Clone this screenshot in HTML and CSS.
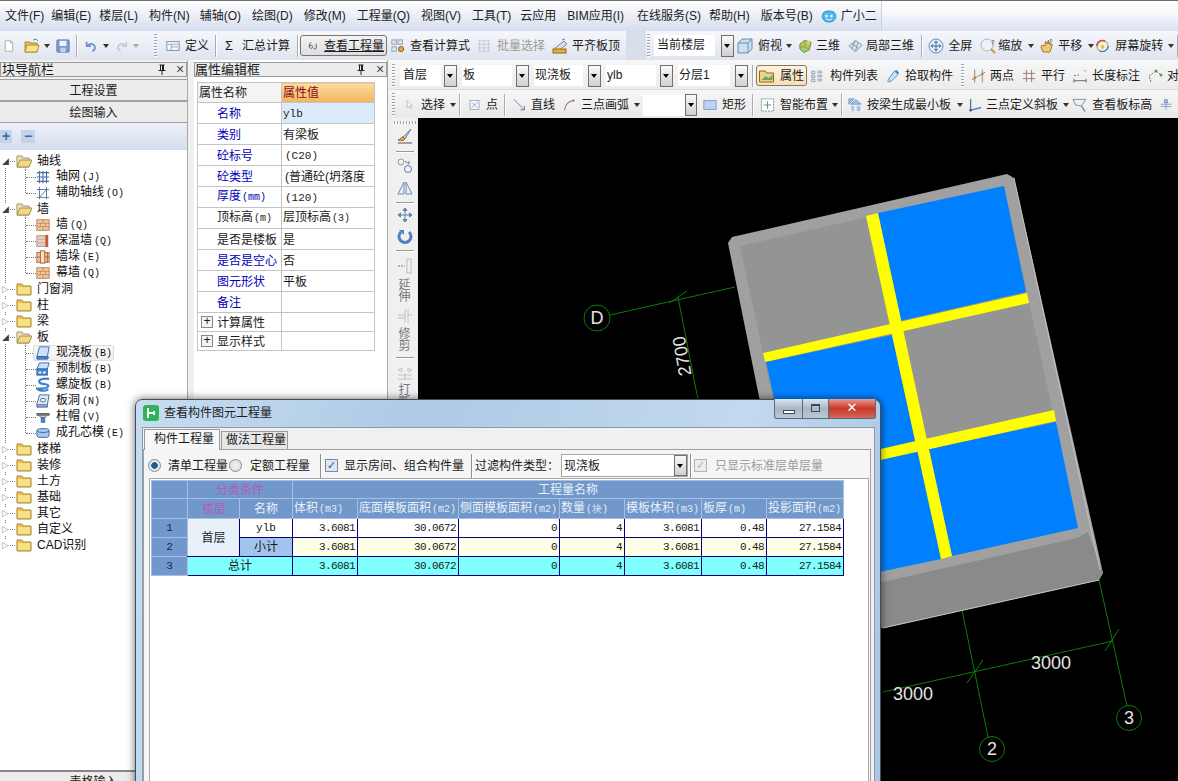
FILE: index.html
```html
<!DOCTYPE html>
<html lang="zh">
<head>
<meta charset="utf-8">
<title>查看构件图元工程量</title>
<link rel="stylesheet" href="styles.css">
</head>
<body>
<svg class="defs" aria-hidden="true">
  <symbol id="pin" viewBox="0 0 12 12"><path d="M3.500 1h5M4.500 1v5M7.500 1v5M6.500 1v5M2.500 6.500h7M6 7v4" stroke="#222" fill="none"/></symbol>
  <symbol id="doc" viewBox="0 0 16 16"><path d="M3 1h7l3 3v11H3z" fill="#fff" stroke="#9a9a9a"/><path d="M10 1v3h3" fill="#e8e8e8" stroke="#9a9a9a"/></symbol>
  <symbol id="open" viewBox="0 0 16 16"><path d="M1 4h5l1 1h6v9H1z" fill="#e6c45a" stroke="#a88a30"/><path d="M3 7h12l-2 7H1z" fill="#f9e08c" stroke="#b0922f"/><path d="M9 2l3-1 2 2" fill="none" stroke="#4a8ac8"/></symbol>
  <symbol id="save" viewBox="0 0 16 16"><rect x="1" y="1" width="14" height="14" rx="1" fill="#7d9bd0" stroke="#5273ad"/><rect x="4" y="2" width="8" height="6" fill="#eef2fa"/><rect x="5" y="10" width="6" height="5" fill="#c9d3e4"/></symbol>
  <symbol id="undo" viewBox="0 0 16 16"><path d="M3 3v5h5M3.500 8c3-4 8-3 9 1 .5 2-1 4-3 5" fill="none" stroke="#6c92d0" stroke-width="2"/></symbol>
  <symbol id="redo" viewBox="0 0 16 16"><path d="M13 3v5H8M12.500 8c-3-4-8-3-9 1-.5 2 1 4 3 5" fill="none" stroke="#c6ccd6" stroke-width="2"/></symbol>
  <symbol id="define" viewBox="0 0 16 16"><rect x="1" y="3" width="14" height="10" fill="#f4f7fb" stroke="#7388a8"/><path d="M2 6h12M6 6v7M6 9h8" stroke="#8ea2bf"/></symbol>
  <symbol id="glasses" viewBox="0 0 16 16"><path d="M4 3C1 6 1 11 4 11s3-4 0-4-2 1-3 2M11 5v5c0 3-3 2-4 1" fill="none" stroke="#555" stroke-width="1.200"/></symbol>
  <symbol id="calc" viewBox="0 0 16 16"><rect x="1" y="1" width="5" height="5" fill="#dfe6f0" stroke="#8899b3"/><rect x="8" y="1" width="5" height="5" fill="#dfe6f0" stroke="#8899b3"/><rect x="1" y="9" width="5" height="5" fill="#dfe6f0" stroke="#8899b3"/><circle cx="11.500" cy="11.500" r="3" fill="#e3a23c" stroke="#8a5a14"/></symbol>
  <symbol id="batch" viewBox="0 0 16 16"><path d="M1 2h14M1 6h14M1 10h14M1 14h14M3 2v12M8 2v12M13 2v12" stroke="#c3c7cf"/></symbol>
  <symbol id="flush" viewBox="0 0 16 16"><path d="M3 10l9-7 3 3-9 7z" fill="#d6dde8" stroke="#7e8ba0"/><rect x="1" y="11" width="13" height="4" fill="#e2b23f" stroke="#8d6a14"/><path d="M10 2l3-1" stroke="#7e8ba0"/></symbol>
  <symbol id="cube" viewBox="0 0 16 16"><path d="M1 5l4-4h10v10l-4 4H1z" fill="#c8e0f0" stroke="#6f8da8"/><path d="M1 5h10v10M11 5l4-4" fill="none" stroke="#6f8da8"/></symbol>
  <symbol id="three" viewBox="0 0 16 16"><path d="M2 6l5-4 7 2-2 8-6 3-4-4z" fill="#9fcf70" stroke="#5c8e3a"/><path d="M7 2l1 7-6 0M8 9l4 3" stroke="#d9822b" fill="none"/><circle cx="11" cy="4" r="2" fill="#f0c94e"/></symbol>
  <symbol id="local" viewBox="0 0 16 16"><path d="M1 8l7-6 7 5-7 7z" fill="#dbe5ef" stroke="#8496ab"/><path d="M4 5.500l7 5M8 2l-4 9M11 4l-3 9" stroke="#8496ab" fill="none"/></symbol>
  <symbol id="full" viewBox="0 0 16 16"><circle cx="8" cy="8" r="7" fill="#e3ecf7" stroke="#6f8db3"/><path d="M8 3v10M3 8h10M8 3L6.500 5M8 3l1.500 2M8 13l-1.500-2M8 13l1.500-2M3 8l2-1.500M3 8l2 1.500M13 8l-2-1.500M13 8l-2 1.500" stroke="#3f6ea8" fill="none"/></symbol>
  <symbol id="zoom" viewBox="0 0 16 16"><circle cx="7" cy="7" r="6" fill="#edf1f7" stroke="#a9b6c8"/><path d="M11 11l4 4" stroke="#c59a3a" stroke-width="2"/><path d="M13 2v5M11.500 3.500L13 2l1.500 1.500" stroke="#8a8a8a" fill="none"/></symbol>
  <symbol id="pan" viewBox="0 0 16 16"><path d="M3 9l2 5h7l2-6V6l-2 1V4l-1.500 2V2L9 6 7.500 3 7 8 4 7z" fill="#eec77a" stroke="#a67c2a"/><path d="M13 1v4M11.500 2.500L13 1l1.500 1.500" stroke="#888" fill="none"/></symbol>
  <symbol id="rot" viewBox="0 0 16 16"><circle cx="8" cy="8" r="6" fill="#f3f1dc" stroke="#74a04c"/><path d="M2 8a6 6 0 0 1 9-5" fill="none" stroke="#d04a3a" stroke-width="1.600"/><path d="M14 8a6 6 0 0 1-9 5" fill="none" stroke="#3f7fc0" stroke-width="1.200"/><circle cx="8" cy="9" r="2" fill="#e7c14f"/></symbol>
  <symbol id="attr" viewBox="0 0 16 16"><path d="M1 3h6l1 2h7v9H1z" fill="#eed08a" stroke="#8d6b24"/><path d="M3 12l4-4 3 2 4-3v5H3z" fill="#6ea560"/></symbol>
  <symbol id="list" viewBox="0 0 16 16"><path d="M2 2h4v3H2zM2 7h4v3H2zM2 12h4v3H2zM9 2h6M9 7h6M9 12h6M9 4h6M9 9h6M9 14h6" fill="none" stroke="#7b90ad"/></symbol>
  <symbol id="drop" viewBox="0 0 16 16"><path d="M10 2l4 4-7 7-4 2-1-1 2-4z" fill="#cfe6f7" stroke="#3f84c5"/><path d="M10 3l2-2 3 3-2 2z" fill="#3f84c5"/></symbol>
  <symbol id="two" viewBox="0 0 16 16"><path d="M4 1v14M12 1v14M1 12l14-8" stroke="#96806a" fill="none"/><circle cx="4" cy="10" r="1.500" fill="#c08a34"/><circle cx="12" cy="6" r="1.500" fill="#8bb04a"/></symbol>
  <symbol id="para" viewBox="0 0 16 16"><path d="M5 1v14M11 1v14M1 5h14M1 11h14" stroke="#9a6a6a"/></symbol>
  <symbol id="dim" viewBox="0 0 16 16"><path d="M1 11v4M14 11v4M1 13h13" stroke="#666" fill="none"/><path d="M2 7v1M13 2v1M5 7h1" stroke="#4a9a4a" stroke-width="2"/></symbol>
  <symbol id="align" viewBox="0 0 16 16"><path d="M2 8l7-5 5 4M4 14L2 8" stroke="#777" stroke-dasharray="2 1" fill="none"/><circle cx="9" cy="3" r="1.500" fill="#5a9a4a"/><circle cx="14" cy="7" r="1.500" fill="#5a9a4a"/></symbol>
  <symbol id="cursor" viewBox="0 0 16 16"><path d="M5 1v11l3-2 2 4 2-1-2-4h3z" fill="#fff" stroke="#8aa0bc"/></symbol>
  <symbol id="pt" viewBox="0 0 16 16"><rect x="1.500" y="1.500" width="13" height="13" fill="#f4f7fb" stroke="#7f93b3"/><path d="M4 4l8 8M12 4l-8 8" stroke="#7f93b3"/></symbol>
  <symbol id="line" viewBox="0 0 16 16"><path d="M1 1l13 13M14 14v-5M14 14H9" stroke="#50688a" fill="none"/></symbol>
  <symbol id="arc" viewBox="0 0 16 16"><path d="M2 15C3 8 7 3 14 2" stroke="#8b7a6a" stroke-width="1.500" fill="none"/><circle cx="14" cy="2" r="1.500" fill="#c45a4a"/></symbol>
  <symbol id="rect" viewBox="0 0 16 16"><rect x="1" y="3" width="14" height="10" fill="#bcd4f2" stroke="#7396c9"/></symbol>
  <symbol id="smart" viewBox="0 0 16 16"><rect x="1.500" y="1.500" width="13" height="13" fill="#fff" stroke="#7e8a99" stroke-dasharray="2 1"/><path d="M8 4v8M4 8h8" stroke="#5c8e7a"/></symbol>
  <symbol id="beam" viewBox="0 0 16 16"><path d="M1 1h6l-6 6zM9 2l6 5H3z" fill="#9fc4e8" stroke="#6f97c4"/><rect x="4" y="9" width="3" height="6" fill="#9fc4e8"/><rect x="10" y="9" width="4" height="6" fill="#9fc4e8"/></symbol>
  <symbol id="slope" viewBox="0 0 16 16"><path d="M3 1v13l12-3" stroke="#3c7fc0" fill="none" stroke-width="1.500"/><circle cx="3" cy="14" r="1.500" fill="#555"/></symbol>
  <symbol id="height" viewBox="0 0 16 16"><path d="M1 2h14l-5 7-6-1z" fill="#eef2f7" stroke="#7d8ea6"/><path d="M10 9l4 6" stroke="#7d8ea6" stroke-width="1.500"/></symbol>
  <symbol id="last" viewBox="0 0 16 16"><rect x="6" y="1" width="4" height="4" fill="#a8c4e6" stroke="#6f90bd"/><path d="M1 7h14M1 10h14M8 5v10" stroke="#6f90bd"/></symbol>
  <symbol id="brush" viewBox="0 0 16 16"><path d="M14 1L6 9l2 2z" fill="#c9c9d1" stroke="#7d7d8a"/><path d="M6 9c-2 0-2 2-5 3 3 1 6 1 7-1z" fill="#dca24d" stroke="#9a6e24"/><path d="M1 15h14" stroke="#555"/></symbol>
  <symbol id="swap" viewBox="0 0 16 16"><circle cx="4" cy="4" r="3" fill="none" stroke="#999"/><circle cx="11" cy="11" r="3.500" fill="none" stroke="#5e81ad"/><path d="M8 3l4 3M12 6V3" stroke="#777" fill="none"/></symbol>
  <symbol id="mirror" viewBox="0 0 16 16"><path d="M7 2L1 14h6zM9 2l6 12H9z" fill="#e6edf6" stroke="#6d8db6"/></symbol>
  <symbol id="move" viewBox="0 0 16 16"><path d="M8 1v14M1 8h14M8 1L6 3.500h4zM8 15l-2-2.500h4zM1 8l2.500-2v4zM15 8l-2.500-2v4z" fill="#5e81ad" stroke="#5e81ad"/></symbol>
  <symbol id="rotate" viewBox="0 0 16 16"><path d="M4 3a6 6 0 1 0 8 0" fill="none" stroke="#4f7fc1" stroke-width="3"/><path d="M2 1h5v5z" fill="#4f7fc1"/></symbol>
  <symbol id="ext" viewBox="0 0 16 16"><path d="M1 8h7" stroke="#b5b5b5" stroke-dasharray="2 1" stroke-width="2"/><rect x="10" y="1" width="4" height="14" fill="none" stroke="#bcbcbc"/></symbol>
  <symbol id="trim" viewBox="0 0 16 16"><path d="M8 1v14M11 1v14M1 7h7M11 7h4M1 10h7" stroke="#c0c0c0" fill="none"/></symbol>
  <symbol id="brk" viewBox="0 0 16 16"><path d="M1 5l4-2v4zM15 5l-4-2v4zM1 10h14M1 14h14M8 8v7" stroke="#c4c4c4" fill="none"/></symbol>
  <symbol id="fold" viewBox="0 0 16 16"><path d="M1 3h5l1 2h8v9H1z" fill="#f0c838" stroke="#9a8a50"/><rect x="2" y="6" width="12" height="7" fill="#f8e080"/></symbol>
  <symbol id="foldo" viewBox="0 0 16 16"><path d="M1 3h5l1 2h6v9H1z" fill="#efe3bd" stroke="#a09468"/><path d="M4 7h12l-3 7H1z" fill="#f4d880" stroke="#a49050"/></symbol>
  <symbol id="grid" viewBox="0 0 16 16"><path d="M1 3h14M1 8h14M1 13h14M4 1v14M8 1v14M12 1v14" stroke="#4c6fa8" stroke-width="1.300" fill="none"/></symbol>
  <symbol id="aux" viewBox="0 0 16 16"><path d="M1 13h14M1 4h14M4 1v14M12 1v14M4 13l8-9" stroke="#4c6fa8" fill="none"/></symbol>
  <symbol id="brick" viewBox="0 0 16 16"><rect x="1" y="2" width="14" height="12" fill="#f2c8a4" stroke="#b5784a"/><path d="M1 6h14M1 10h14M8 2v4M5 6v4M11 6v4M8 10v4" stroke="#c08a5a"/></symbol>
  <symbol id="ins" viewBox="0 0 16 16"><rect x="1" y="2" width="10" height="12" fill="#e8cfc4" stroke="#b08878"/><path d="M1 6h10M1 10h10" stroke="#c9a090"/><rect x="11" y="1" width="3" height="14" fill="#c05a3a"/></symbol>
  <symbol id="pier" viewBox="0 0 16 16"><rect x="1" y="3" width="14" height="11" fill="#f0c8a0" stroke="#a85a30"/><rect x="5" y="1" width="5" height="14" fill="#f8e0c8" stroke="#a85a30"/><path d="M1 8h4M10 8h5M13 3v11" stroke="#a85a30"/></symbol>
  <symbol id="slab" viewBox="0 0 16 16"><path d="M4 1h11l-2 11H1z" fill="#cfe2f8" stroke="#2e64ac"/><path d="M1 12h12v3H1zM13 15l2-3" fill="#4e86cc" stroke="#2e64ac"/></symbol>
  <symbol id="pre" viewBox="0 0 16 16"><path d="M4 1h11l-2 7H1z" fill="#cfe2f8" stroke="#2e64ac"/><rect x="1" y="8" width="12" height="7" fill="#4e86cc" stroke="#2e64ac"/><rect x="3" y="11" width="3" height="2" fill="#fff"/><rect x="8" y="11" width="3" height="2" fill="#fff"/></symbol>
  <symbol id="spiral" viewBox="0 0 16 16"><path d="M15 1C8 0 2 2 4 5s10 1 10 4-8 3-13 3c1 2 8 4 13 1" fill="none" stroke="#3f80d0" stroke-width="2.500"/></symbol>
  <symbol id="hole" viewBox="0 0 16 16"><path d="M4 1h11l-2 11H1z" fill="#dfe9f6" stroke="#40608e"/><ellipse cx="8" cy="7" rx="3" ry="2" fill="#fff" stroke="#40608e"/><path d="M1 12v3h12v-3" fill="#8aa8ce" stroke="#40608e"/></symbol>
  <symbol id="cap" viewBox="0 0 16 16"><path d="M1 4h14v2H1z" fill="#888" stroke="#555"/><path d="M3 6h10l-3 3H6z" fill="#c8c8c8" stroke="#666"/><rect x="6" y="9" width="4" height="5" fill="#4e86cc" stroke="#2e64ac"/></symbol>
  <symbol id="core" viewBox="0 0 16 16"><rect x="1" y="3" width="14" height="10" rx="3" fill="#a8c8ec" stroke="#2e64ac"/><path d="M1 6c3 2 11 2 14 0" fill="none" stroke="#2e64ac"/></symbol>
</svg>

<header class="head">
  <nav class="menu">
    <span class="mi">文件(F)</span><span class="mi">编辑(E)</span><span class="mi">楼层(L)</span><span class="mi">构件(N)</span><span class="mi">辅轴(O)</span><span class="mi">绘图(D)</span><span class="mi">修改(M)</span><span class="mi">工程量(Q)</span><span class="mi">视图(V)</span><span class="mi">工具(T)</span><span class="mi">云应用</span><span class="mi">BIM应用(I)</span><span class="mi">在线服务(S)</span><span class="mi">帮助(H)</span><span class="mi">版本号(B)</span>
    <span class="mi helper"><svg class="ic w16" viewBox="0 0 16 16"><path d="M2 6C2 2 14 2 14 6c2 3 0 8-6 8S0 9 2 6z" fill="#54b8e8" stroke="#2e8cc4"/><circle cx="5.500" cy="8" r="1.200" fill="#fff"/><circle cx="10.500" cy="8" r="1.200" fill="#fff"/><path d="M5 10.500c2 2 4 2 6 0" stroke="#fff" fill="none"/></svg><b class="hname">广小二</b></span>
  </nav>
  <div class="tb tb1">
    <svg class="ic w12 m3"><use href="#doc"/></svg><svg class="ic w16 m9"><use href="#open"/></svg><i class="arr m4"></i><svg class="ic w14 m5"><use href="#save"/></svg><i class="sep m6"></i>
    <svg class="ic w14 m7"><use href="#undo"/></svg><i class="arr m5"></i><svg class="ic w14 m5"><use href="#redo"/></svg><i class="arr m4 off"></i><i class="grip m14"></i>
    <svg class="ic w14 m9"><use href="#define"/></svg><span class="t m5">定义</span><i class="sep m6"></i>
    <span class="t sig m9">Σ</span><span class="t m8">汇总计算</span><i class="sep m7"></i>
    <span class="tbtn m2 qty"><svg class="ic w12 m8"><use href="#glasses"/></svg><span class="t m4 ul">查看工程量</span></span>
    <svg class="ic w14 m4"><use href="#calc"/></svg><span class="t m5">查看计算式</span>
    <svg class="ic w14 m7"><use href="#batch"/></svg><span class="t m6 dis">批量选择</span>
    <svg class="ic w16 m7"><use href="#flush"/></svg><span class="t m4">平齐板顶</span>
    <i class="endcap m6"></i><i class="grip m1"></i>
    <span class="sel s61 m4">当前楼层</span><i class="dd m6"></i>
    <svg class="ic w16 m3"><use href="#cube"/></svg><span class="t m5">俯视</span><i class="arr m4"></i>
    <svg class="ic w15 m5"><use href="#three"/></svg><span class="t m3">三维</span>
    <svg class="ic w15 m8"><use href="#local"/></svg><span class="t m3">局部三维</span><i class="sep m7"></i>
    <svg class="ic w16 m6"><use href="#full"/></svg><span class="t m4">全屏</span>
    <svg class="ic w16 m8"><use href="#zoom"/></svg><span class="t m2">缩放</span><i class="arr m6"></i>
    <svg class="ic w16 m3"><use href="#pan"/></svg><span class="t m4">平移</span><i class="arr m6"></i>
    <svg class="ic w15"><use href="#rot"/></svg><span class="t m5">屏幕旋转</span><i class="arr m5"></i><i class="sep m2"></i>
  </div>
</header>

<main class="work">
  <aside class="nav">
    <div class="ptitle"><span class="cut">块导航栏</span><svg class="pin"><use href="#pin"/></svg><span class="x">×</span></div>
    <div class="navbtn first">工程设置</div>
    <div class="navbtn">绘图输入</div>
    <div class="navtools"><span class="nb">+</span><span class="nb minus">−</span></div>
    <div class="tree">
      <div class="node"><i class="exp open"></i><svg class="ic w16"><use href="#foldo"/></svg><span class="tl">轴线</span></div>
      <div class="kids">
        <div class="leaf"><svg class="ic w14"><use href="#grid"/></svg><span class="tl l6">轴网<em>(J)</em></span></div>
        <div class="leaf"><svg class="ic w14"><use href="#aux"/></svg><span class="tl l6">辅助轴线<em>(O)</em></span></div>
      </div>
      <div class="node"><i class="exp open"></i><svg class="ic w16"><use href="#foldo"/></svg><span class="tl">墙</span></div>
      <div class="kids">
        <div class="leaf"><svg class="ic w14"><use href="#brick"/></svg><span class="tl l6">墙<em>(Q)</em></span></div>
        <div class="leaf"><svg class="ic w14"><use href="#ins"/></svg><span class="tl l6">保温墙<em>(Q)</em></span></div>
        <div class="leaf"><svg class="ic w14"><use href="#pier"/></svg><span class="tl l6">墙垛<em>(E)</em></span></div>
        <div class="leaf"><svg class="ic w14"><use href="#brick"/></svg><span class="tl l6">幕墙<em>(Q)</em></span></div>
      </div>
      <div class="node"><i class="exp"></i><svg class="ic w16"><use href="#fold"/></svg><span class="tl">门窗洞</span></div>
      <div class="node"><i class="exp"></i><svg class="ic w16"><use href="#fold"/></svg><span class="tl">柱</span></div>
      <div class="node"><i class="exp"></i><svg class="ic w16"><use href="#fold"/></svg><span class="tl">梁</span></div>
      <div class="node"><i class="exp open"></i><svg class="ic w16"><use href="#foldo"/></svg><span class="tl">板</span></div>
      <div class="kids">
        <div class="leaf cur"><svg class="ic w14"><use href="#slab"/></svg><span class="tl l6">现浇板<em>(B)</em></span></div>
        <div class="leaf"><svg class="ic w14"><use href="#pre"/></svg><span class="tl l6">预制板<em>(B)</em></span></div>
        <div class="leaf"><svg class="ic w14"><use href="#spiral"/></svg><span class="tl l6">螺旋板<em>(B)</em></span></div>
        <div class="leaf"><svg class="ic w14"><use href="#hole"/></svg><span class="tl l6">板洞<em>(N)</em></span></div>
        <div class="leaf"><svg class="ic w14"><use href="#cap"/></svg><span class="tl l6">柱帽<em>(V)</em></span></div>
        <div class="leaf"><svg class="ic w14"><use href="#core"/></svg><span class="tl l6">成孔芯模<em>(E)</em></span></div>
      </div>
      <div class="node"><i class="exp"></i><svg class="ic w16"><use href="#fold"/></svg><span class="tl">楼梯</span></div>
      <div class="node"><i class="exp"></i><svg class="ic w16"><use href="#fold"/></svg><span class="tl">装修</span></div>
      <div class="node"><i class="exp"></i><svg class="ic w16"><use href="#fold"/></svg><span class="tl">土方</span></div>
      <div class="node"><i class="exp"></i><svg class="ic w16"><use href="#fold"/></svg><span class="tl">基础</span></div>
      <div class="node"><i class="exp"></i><svg class="ic w16"><use href="#fold"/></svg><span class="tl">其它</span></div>
      <div class="node"><i class="exp"></i><svg class="ic w16"><use href="#fold"/></svg><span class="tl">自定义</span></div>
      <div class="node"><i class="exp"></i><svg class="ic w16"><use href="#fold"/></svg><span class="tl">CAD识别</span></div>
    </div>
    <div class="navfoot"><span>表格输入</span></div>
  </aside>

  <section class="props">
    <div class="ptitle"><span>属性编辑框</span><svg class="pin"><use href="#pin"/></svg><span class="x">×</span></div>
    <table class="ptable">
      <tr class="phead"><th>属性名称</th><th class="pv">属性值</th></tr>
      <tr class="psel"><td class="b">名称</td><td class="latin">ylb</td></tr>
      <tr><td class="b">类别</td><td>有梁板</td></tr>
      <tr><td class="b">砼标号</td><td class="latin in">(C20)</td></tr>
      <tr><td class="b">砼类型</td><td class="in clip">(普通砼(坍落度</td></tr>
      <tr><td class="b">厚度<em>(mm)</em></td><td class="latin in">(120)</td></tr>
      <tr><td class="k">顶标高<em>(m)</em></td><td>层顶标高<em>(3)</em></td></tr>
      <tr><td class="k">是否是楼板</td><td>是</td></tr>
      <tr><td class="b">是否是空心</td><td>否</td></tr>
      <tr><td class="b">图元形状</td><td>平板</td></tr>
      <tr><td class="b">备注</td><td></td></tr>
      <tr class="pgroup"><td class="k"><i class="plus">+</i>计算属性</td><td></td></tr>
      <tr class="pgroup"><td class="k"><i class="plus">+</i>显示样式</td><td></td></tr>
    </table>
  </section>

  <section class="stage">
    <div class="tb tb2">
      <i class="grip m3"></i>
      <span class="sel s41 m5">首层</span><i class="dd m3"></i>
      <span class="sel p1 s50 m5">板</span><i class="dd m4"></i>
      <span class="sel p1 s49 m5">现浇板</span><i class="dd m5"></i>
      <span class="sel p1 s50 m5">ylb</span><i class="dd m4"></i>
      <span class="sel p1 s52 m5">分层1</span><i class="dd m5"></i><i class="sep m4"></i>
      <span class="tbtn m3 attrb"><svg class="ic w17 m2"><use href="#attr"/></svg><span class="t m5">属性</span></span>
      <svg class="ic w13 m3"><use href="#list"/></svg><span class="t m7">构件列表</span>
      <svg class="ic w14 m8"><use href="#drop"/></svg><span class="t m5">拾取构件</span><i class="grip m8"></i>
      <svg class="ic w15 m7"><use href="#two"/></svg><span class="t m4">两点</span>
      <svg class="ic w14 m8"><use href="#para"/></svg><span class="t m5">平行</span>
      <svg class="ic w15 m8"><use href="#dim"/></svg><span class="t m4">长度标注</span>
      <svg class="ic w16 m7"><use href="#align"/></svg><span class="t m4">对</span>
    </div>
    <div class="tb tb3">
      <i class="grip m3"></i>
      <svg class="ic w10 m9"><use href="#cursor"/></svg><span class="t m7">选择</span><i class="arr m5"></i><i class="sep m2"></i>
      <svg class="ic w11 m9"><use href="#pt"/></svg><span class="t m6">点</span><i class="sep m6"></i>
      <svg class="ic w13 m8"><use href="#line"/></svg><span class="t m5">直线</span>
      <svg class="ic w12 m8"><use href="#arc"/></svg><span class="t m6">三点画弧</span><i class="arr m5"></i>
      <span class="sel s42 m2"></span><i class="dd sm"></i>
      <svg class="ic w14 m6"><use href="#rect"/></svg><span class="t m5">矩形</span><i class="sep m6"></i>
      <svg class="ic w15 m7"><use href="#smart"/></svg><span class="t m5">智能布置</span><i class="arr m4"></i><i class="sep m2"></i>
      <svg class="ic w14 m6"><use href="#beam"/></svg><span class="t m5">按梁生成最小板</span><i class="arr m6"></i>
      <svg class="ic w14 m4"><use href="#slope"/></svg><span class="t m4">三点定义斜板</span><i class="arr m5"></i>
      <svg class="ic w15 m2"><use href="#height"/></svg><span class="t m5">查看板标高</span>
      <svg class="ic w12 m8"><use href="#last"/></svg>
    </div>
    <div class="view">
      <div class="vtb">
        <i class="vgrip"></i>
        <svg class="ic w16 v4"><use href="#brush"/></svg><i class="vsep v7"></i>
        <svg class="ic w16 v6"><use href="#swap"/></svg><svg class="ic w16 v6"><use href="#mirror"/></svg><i class="vsep v6"></i>
        <svg class="ic w16 v4"><use href="#move"/></svg><svg class="ic w16 v6"><use href="#rotate"/></svg><i class="vsep v5"></i>
        <svg class="ic w16 v7"><use href="#ext"/></svg><span class="vt v5">延伸</span>
        <svg class="ic w16 v5"><use href="#trim"/></svg><span class="vt v4">修剪</span><i class="vsep v5"></i>
        <svg class="ic w16 v7"><use href="#brk"/></svg><span class="vt v3">打断</span>
      </div>
      <svg class="cad" viewBox="418 118 760 663">
        <rect x="418" y="118" width="760" height="663" fill="#000"/>
        <g stroke="#0b7d0b" fill="none">
          <path d="M610 315L735 287M678 297L700 410M669 303l18-12"/>
          <circle cx="597" cy="318" r="13"/>
          <path d="M962 610L988 737M1099 580L1127 706M883 692L1113 641M967 683L983 660M1105 651L1119 629"/>
          <circle cx="992" cy="749" r="12.500"/><circle cx="1129" cy="718" r="12.500"/>
        </g>
        <polygon points="732,237 1007,174 1014,178 1103,573 1099,580 883,628 800,600 728,243" fill="#a0a0a0"/>
        <polygon points="1088,532 1103,573 1099,580 883,628 800,640 790,590 883,582 1077,538" fill="#8a8a8a"/>
        <path d="M1014 178L1100 570M883 628L1099 580" stroke="#c4c4c4" fill="none"/>
        <polygon points="740,246 1004,186 1078,528 813,586" fill="#949494"/>
        <polygon points="878,213 1004,186 1026,292 900,321" fill="#0080ff"/>
        <polygon points="766,362 892,335 915,441 790,470" fill="#0080ff"/>
        <polygon points="929,449 1056,422 1078,528 952,556" fill="#0080ff"/>
        <polygon points="800,480 920,450 941,559 813,586" fill="#0080ff"/>
        <g fill="#ffff00">
          <polygon points="866,216 878,213 952,556 941,559"/>
          <polygon points="763,353 1027,293 1029,303 765,362"/>
          <polygon points="1054,410 1056,421 790,480 788,470"/>
        </g>
        <g class="dimtxt">
          <text x="597" y="324" class="lbl">D</text>
          <text x="992" y="755" class="lbl">2</text>
          <text x="1129" y="724" class="lbl">3</text>
          <text x="1051" y="669" class="lbl">3000</text>
          <text x="913" y="700" class="lbl">3000</text>
          <text class="lbl" transform="translate(688 355) rotate(-100)">2700</text>
        </g>
      </svg>
    </div>
  </section>
</main>

<div class="dlg">
  <div class="dtitle">
    <svg class="ic w16 dlogo" viewBox="0 0 16 16"><rect width="16" height="16" rx="3" fill="#2fb25a"/><path d="M5 3v10M5 8h6M11 6v4" stroke="#fff" stroke-width="2" fill="none"/></svg>
    <span class="dname">查看构件图元工程量</span>
    <div class="wbtns"><span class="wb wmin"><i></i></span><span class="wb wmax"><i></i></span><span class="wb wclose">✕</span></div>
  </div>
  <div class="dclient">
    <div class="tabs"><span class="tab on">构件工程量</span><span class="tab">做法工程量</span></div>
    <div class="pane">
      <div class="opts">
        <i class="radio on m4"></i><span class="t m7">清单工程量</span>
        <i class="radio m1"></i><span class="t m8">定额工程量</span><i class="osep m10"></i>
        <i class="check m4">✓</i><span class="t m6">显示房间、组合构件量</span><i class="osep m7"></i>
        <span class="t m3">过滤构件类型：</span>
        <span class="combo m2"><span class="ctext">现浇板</span><i class="dd"></i></span><i class="osep m2"></i>
        <i class="check off m3">✓</i><span class="t m8 dis">只显示标准层单层量</span>
      </div>
      <div class="gridbox">
        <table class="qt">
          <colgroup><col class="c1"><col class="c2"><col class="c3"><col class="c4"><col class="c5"><col class="c6"><col class="c7"><col class="c8"><col class="c9"><col class="c10"></colgroup>
          <tr class="h1"><th></th><th colspan="2" class="pur">分类条件</th><th colspan="7">工程量名称</th></tr>
          <tr class="h2"><th></th><th class="pur">楼层</th><th class="ctr">名称</th><th>体积<em>(m3)</em></th><th>底面模板面积<em>(m2)</em></th><th>侧面模板面积<em>(m2)</em></th><th>数量<em>(块)</em></th><th>模板体积<em>(m3)</em></th><th>板厚<em>(m)</em></th><th>投影面积<em>(m2)</em></th></tr>
          <tr class="r1"><th class="no">1</th><td rowspan="2" class="fl">首层</td><td class="nm">ylb</td><td>3.6081</td><td>30.0672</td><td>0</td><td>4</td><td>3.6081</td><td>0.48</td><td>27.1584</td></tr>
          <tr class="r2"><th class="no">2</th><td class="sub">小计</td><td>3.6081</td><td>30.0672</td><td>0</td><td>4</td><td>3.6081</td><td>0.48</td><td>27.1584</td></tr>
          <tr class="r3"><th class="no">3</th><td colspan="2" class="tot">总计</td><td>3.6081</td><td>30.0672</td><td>0</td><td>4</td><td>3.6081</td><td>0.48</td><td>27.1584</td></tr>
        </table>
      </div>
    </div>
  </div>
</div>
</body>
</html>
```
FILE: styles.css
```css
*{box-sizing:border-box}
html,body{margin:0;padding:0}
body{position:relative;width:1178px;height:781px;overflow:hidden;display:flex;flex-direction:column;background:#f0f0f0;color:#1a1a1a;font:12px/16px "Liberation Sans","Noto Sans CJK SC",sans-serif}
.defs{position:absolute;width:0;height:0}
i{font-style:normal;display:block;flex:none}
em{font:10px/16px "Liberation Mono",monospace;font-style:normal;margin-left:1px}

.head{flex:none;height:60px}
.menu{height:31px;border-top:1px solid #707070;display:flex;align-items:center;padding:0 0 0 5px;gap:11px;background:linear-gradient(#fff 0,#f4f6fb 25%,#d5ddef 100%);position:relative}
.mi{flex:none;white-space:nowrap;color:#222;display:flex;align-items:center}
.mi:nth-child(1){margin-right:-4px}
.mi:nth-child(2){margin-right:-3px}
.mi:nth-child(4){margin-right:-1px}
.mi:nth-child(10){margin-right:-2px}
.mi:nth-child(12){margin-right:2px}
.mi:nth-child(13){margin-right:-3px}
.helper{margin-left:-3px;gap:4px}
.hname{font-weight:400}
.menu::after{content:"";position:absolute;left:881px;top:0;right:0;bottom:0;border-left:1px solid #c9d0de;background:linear-gradient(#fff,#fafbfd 30%,#dbe2f1)}

.tb{display:flex;align-items:center;white-space:nowrap;overflow:hidden;flex:none}
.tb1{height:29px;background:linear-gradient(#f5f7fb,#e0e4ee)}
.tb2{height:30px;padding-top:2px;background:linear-gradient(#f7f7f7,#ececec);border-bottom:1px solid #dcdcdc}
.tb3{height:28px;padding-top:2px;background:linear-gradient(#f7f7f7,#e9e9e9)}
.ic{flex:none;display:block;height:16px;overflow:visible}
.w10{width:10px}.w11{width:11px}.w12{width:12px}.w13{width:13px}.w14{width:14px}.w15{width:15px}.w16{width:16px}.w17{width:17px}
.m1{margin-left:1px}.m2{margin-left:2px}.m3{margin-left:3px}.m4{margin-left:4px}.m5{margin-left:5px}.m6{margin-left:6px}.m7{margin-left:7px}.m8{margin-left:8px}.m9{margin-left:9px}.m10{margin-left:10px}.m14{margin-left:14px}
.t{flex:none;white-space:nowrap}
.sig{width:9px;font-size:13px}
.dis{color:#9c9c9c}
.ul{text-decoration:underline}
.arr{width:7px;height:4px;position:relative}
.arr::after{content:"";position:absolute;left:0;top:0;border:3.500px solid transparent;border-top:4px solid #333;border-bottom:0}
.arr.off::after{border-top-color:#a8a8a8}
.sep{width:1px;height:22px;background:#a9adb5;box-shadow:1px 0 0 #fff}
.grip{width:3px;height:24px;background:repeating-linear-gradient(#9aa3b3 0 1px,#fff 1px 2px,transparent 2px 3px)}
.endcap{width:20px;height:29px;background:#d8deea}
.tbtn{flex:none;display:flex;align-items:center;height:21px;border:1px solid #777;border-radius:3px;background:linear-gradient(#f4f4f4,#dedede)}
.qty{width:87px}
.qty .ic{margin-left:7px}
.attrb{width:51px;border-color:#8a7a5a;background:linear-gradient(#fdf4e2,#f6dfb6)}
.attrb .ic{margin-left:1px}
.sel{flex:none;display:block;height:21px;line-height:21px;padding-left:3px;background:#fff}
.sel.p1{padding-left:1px}
.s41{width:41px}.s42{width:42px}.s49{width:49px}.s50{width:50px}.s52{width:52px}.s61{width:61px}
.dd{flex:none;width:13px;height:22px;border:1px solid #6f6f6f;background:linear-gradient(#fafafa,#cfcfcf);position:relative}
.dd.sm{width:12px}
.dd::after{content:"";position:absolute;left:2px;top:8px;border:3.500px solid transparent;border-top:4px solid #000;border-bottom:0}

.work{flex:1;display:flex;min-height:0;position:relative}
.nav{flex:none;width:188px;display:flex;flex-direction:column;padding-top:2px;border-right:1px solid #a8a8a8;background:#f0f0f0}
.ptitle{flex:none;height:15px;display:flex;align-items:center;border:1px solid #9a9a9a;background:#ececec;font-size:13px;line-height:13px;overflow:hidden;position:relative}
.cut{margin-left:1px;white-space:nowrap}
.pin{position:absolute;top:1px;left:155px;width:12px;height:12px}
.x{position:absolute;top:0;line-height:13px;left:175px;font-size:14px;color:#444}
.navbtn{flex:none;height:22px;line-height:22px;text-align:center;background:#ececec;border:1px solid #a0a0a0;border-width:1px 0}
.navbtn.first{margin-top:2px}
.navtools{flex:none;height:27px;display:flex;gap:9px;background:linear-gradient(#eef1f8,#d5dced);align-items:flex-start;padding-top:7px}
.nb{width:12px;height:13px;background:#c3d4ea;color:#3f6ea8;font:700 14px/12px "Liberation Sans",sans-serif;text-align:center}
.minus{width:14px}
.tree{flex:1;min-height:0;background:#fff;padding-top:3px;position:relative}
.tree::before{content:"";position:absolute;left:5px;top:11px;height:384px;border-left:1px dotted #777}
.node{height:16px;display:flex;align-items:center;padding-left:16px;position:relative}
.tl{margin-left:5px;white-space:nowrap;color:#111}
.l6{margin-left:6px}
.tl em{margin-left:2px}
.exp{position:absolute;left:2px;top:2px;width:8px;height:12px;font:9px/12px "DejaVu Sans",sans-serif;color:#9a9a9a;background:#fff;z-index:1}
.exp::before{content:"▷"}
.exp.open{color:#444}
.exp.open::before{content:"◢"}
.node::after{content:"";position:absolute;left:10px;top:8px;width:5px;border-top:1px dotted #777}
.kids{position:relative}
.kids::before{content:"";position:absolute;left:25px;top:0;bottom:8px;border-left:1px dotted #777}
.leaf{height:16px;display:flex;align-items:center;padding-left:36px;position:relative;width:130px}
.leaf::after{content:"";position:absolute;left:26px;top:8px;width:10px;border-top:1px dotted #777}
.leaf.cur{background:linear-gradient(#fafafa,#eeeeee);box-shadow:inset 0 0 0 1px #dcdcdc;border-radius:3px;margin-left:33px;padding-left:3px;width:81px}
.leaf.cur::after{left:-7px;width:7px}
.navfoot{flex:none;height:11px;border-top:2px solid #888;background:#ececec;text-align:center;line-height:20px;overflow:hidden}

.props{flex:none;width:194px;margin-left:6px;background:#fff;padding-top:2px;border-right:1px solid #a8a8a8;position:relative}
.props .ptitle{width:193px}
.props .pin{left:160px}
.props .x{left:181px}
.ptable{margin:5px 0 0 3px;border-collapse:collapse;table-layout:fixed;width:178px}
.ptable td,.ptable th{height:21px;padding:1px 0 0 1px;border:1px solid #c4c4c4;font-weight:400;text-align:left;white-space:nowrap;overflow:hidden;line-height:14px}
.ptable tr>:first-child{width:84px}
.ptable tr>.b,.ptable tr>.k{padding-left:19px}
.phead th{height:20px;background:#f4f4f4}
.ptable .pv{background:linear-gradient(#fbdca0,#f2b45c);color:#8a0a1a}
.psel td:last-child{background:#dcebf9}
.b{color:#0000b8}
.ptable td.latin{font:11px/14px "Liberation Mono",monospace}
.ptable .in{padding-left:3px}
.clip{text-overflow:clip}
.ptable .pgroup td{height:19px;padding-top:2px}
.ptable .pgroup td:first-child{position:relative}
.plus{position:absolute;left:3px;top:3px;width:12px;height:12px;border:1px solid #888;font:12px/10px "Liberation Mono",monospace;text-align:center;background:#f3f3f3}

.stage{flex:1;min-width:0;display:flex;flex-direction:column;margin-left:1px}
.view{flex:1;min-height:0;display:flex}
.vtb{flex:none;width:29px;display:flex;flex-direction:column;align-items:center;padding-left:2px;background:#f0f0f0;overflow:hidden}
.vtb>.ic{width:16px}
.vgrip{width:22px;height:3px;margin-top:3px;background:repeating-linear-gradient(90deg,#9aa3b3 0 1px,#fff 1px 2px,transparent 2px 3px)}
.vsep{width:18px;height:1px;background:#9a9a9a;box-shadow:0 1px 0 #fff}
.vt{width:12px;line-height:12px;color:#777;text-align:center;flex:none}
.v3{margin-top:3px}.v4{margin-top:4px}.v5{margin-top:5px}.v6{margin-top:6px}.v7{margin-top:7px}
.cad{flex:1;min-width:0;height:663px;display:block}
.lbl{font:18px "Liberation Sans",sans-serif;fill:#e4e4e4;text-anchor:middle}

.dlg{position:absolute;left:135px;top:399px;width:746px;height:430px;border:1px solid #3e4c5c;border-radius:7px 7px 0 0;background:linear-gradient(100deg,#c6ddf1 0,#aecae5 35%,#c2d9ef 75%,#a8c5e2 100%);box-shadow:0 0 9px rgba(0,0,0,.6);padding:0 5px 0 6px;display:flex;flex-direction:column}
.dtitle{flex:none;height:28px;display:flex;align-items:center;position:relative;margin-top:-1px}
.dlogo{margin-left:1px}
.dname{margin-left:5px;color:#1c1c1c}
.wbtns{position:absolute;right:-1px;top:0;display:flex;height:20px}
.wb{display:block;height:20px;border:1px solid #5a6a7a;border-top:0;border-left-width:0;background:linear-gradient(#dbe5f0,#a9b6c6 50%,#bcc8d6)}
.wmin{width:29px;border-left-width:1px;border-radius:0 0 0 3px;position:relative}
.wmin i{position:absolute;left:8px;top:11px;width:12px;height:4px;border:1px solid #39465a;background:#fff}
.wmax{width:26px;position:relative}
.wmax i{position:absolute;left:8px;top:5px;width:9px;height:8px;border:1px solid #39465a;border-top-width:2px}
.wclose{width:47px;border-radius:0 0 3px 0;background:linear-gradient(#e89a8c,#c8392a 50%,#d4685a);color:#fff;text-align:center;font:700 13px/18px "DejaVu Sans",sans-serif}
.dclient{flex:1;min-height:0;background:#f0f0f0;border:1px solid #8d9aa8;padding-top:1px}
.tabs{height:20px;display:flex;align-items:flex-end;position:relative;z-index:1}
.tab{display:block;height:18px;width:67px;padding-left:4px;line-height:17px;background:#e6e6e6;border:1px solid #9a9a9a;border-bottom:0;margin-left:1px}
.tab.on{height:21px;width:76px;margin:0 0 -1px 1px;padding-left:9px;background:#f7f7f7;line-height:19px}
.pane{margin-right:3px;height:400px;border:1px solid #a0a0a0;background:#f5f5f5;display:flex;flex-direction:column}
.opts{flex:none;height:29px;padding-top:2px;display:flex;align-items:center;white-space:nowrap}
.radio{width:13px;height:13px;border-radius:50%;border:1px solid #8a8a8a;background:radial-gradient(circle,#f4f4f4 0,#d4d4d4 100%)}
.radio.on{background:radial-gradient(circle,#1b5e8e 0 3px,#e0e8f0 3.500px)}
.check{width:13px;height:13px;border:1px solid #7a8ba0;background:#dde6f2;color:#2c5a94;font:700 11px/11px "DejaVu Sans",sans-serif;text-align:center}
.check.off{background:#ececec;border-color:#b4b4b4;color:#b0b0b0}
.osep{width:1px;height:24px;background:#8f8f8f;box-shadow:1px 0 0 #fff}
.combo{flex:none;width:127px;height:23px;display:flex;align-items:center;justify-content:space-between;background:#fff;border:1px solid #a6a6a6;padding-left:2px}
.combo .dd{height:21px}
.gridbox{flex:1;margin:-1px 1px 0 5px;background:#fff;border:1px solid #a8a8a8;border-bottom:0;padding:1px 0 0 1px}
.qt{border-collapse:collapse;table-layout:fixed;width:692px;font-size:12px}
.c1{width:36px}.c2{width:52px}.c3{width:53px}.c4{width:65px}.c5{width:101px}.c6{width:101px}.c7{width:65px}.c8{width:77px}.c9{width:65px}.c10{width:77px}
.qt th,.qt td{padding:0;overflow:hidden;white-space:nowrap;line-height:16px}
.qt th{background:#7098ca;border:1px solid #a8bfdf;font-weight:400;color:#eaf0f8}
.h1 th{height:18px;text-align:center}
.h2 th{height:20px;text-align:left;padding-left:1px}
.qt em{color:#e3eaf4}
.qt .pur{color:#b35cb5;text-align:center}
.qt .ctr{text-align:center;padding:0}
.qt td{height:19px;border:1px solid #000080;text-align:right;padding-right:2px;font:11px/16px "Liberation Mono",monospace;letter-spacing:-.6px;background:#fff}
.qt th.no{text-align:center;color:#14285a;font:11px/16px "Liberation Mono",monospace;border-color:#a8bfdf}
.qt .fl{text-align:center;padding:0;background:#e8f0fa;letter-spacing:0;font:12px/16px "Liberation Sans","Noto Sans CJK SC",sans-serif;border-color:#e8f0fa #000080 #000080 #a8bfdf}
.qt .nm{text-align:center;padding:0;letter-spacing:0}
.qt .sub{text-align:center;padding:0;background:#a2c4ec;letter-spacing:0;font:12px/16px "Liberation Sans","Noto Sans CJK SC",sans-serif}
.r2 td{background:#fffde6}
.r3 td{background:#80ffff}
.qt .tot{text-align:center;padding:0;letter-spacing:0;background:#80ffff;font:12px/16px "Liberation Sans","Noto Sans CJK SC",sans-serif}
```
